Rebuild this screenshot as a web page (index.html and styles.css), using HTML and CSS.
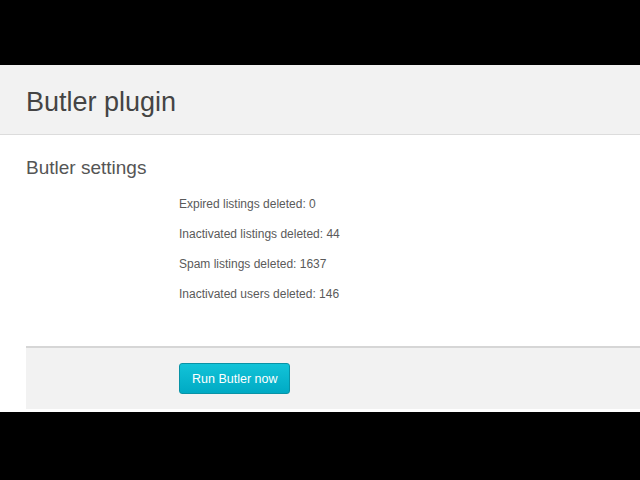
FILE: index.html
```html
<!DOCTYPE html>
<html>
<head>
<meta charset="utf-8">
<link rel="stylesheet" href="styles.css">
</head>
<body>
<div class="topbar"></div>
<div class="page">
  <header class="page-header">
    <h1 class="title">Butler plugin</h1>
  </header>
  <section class="content">
    <h2 class="subtitle">Butler settings</h2>
    <div class="stats">
      <p class="stat">Expired listings deleted: 0</p>
      <p class="stat">Inactivated listings deleted: 44</p>
      <p class="stat">Spam listings deleted: 1637</p>
      <p class="stat">Inactivated users deleted: 146</p>
    </div>
  </section>
  <div class="actions">
    <button class="btn">Run Butler now</button>
  </div>
</div>
</body>
</html>
```
FILE: styles.css
```css
html, body {
  margin: 0;
  padding: 0;
  background: #000;
  height: 480px;
  overflow: hidden;
  font-family: "Liberation Sans", Arial, sans-serif;
}
.topbar {
  height: 65px;
}
.page {
  background: #fff;
  height: 347px;
  display: flex;
  flex-direction: column;
}
.page-header {
  height: 70px;
  background: #f2f2f2;
  border-bottom: 1px solid #dcdcdc;
  display: flex;
  align-items: center;
  padding-left: 26px;
  box-sizing: border-box;
}
.title {
  margin: 0;
  font-size: 27px;
  font-weight: normal;
  color: #444;
  line-height: 1;
  padding-top: 6px;
}
.content {
  padding-left: 26px;
  height: 211px;
  box-sizing: border-box;
}
.subtitle {
  margin: 22px 0 0 0;
  font-size: 19px;
  font-weight: normal;
  color: #555;
  line-height: 22px;
}
.stats {
  padding-left: 153px;
  margin-top: 18px;
  display: flex;
  flex-direction: column;
  gap: 15px;
}
.stat {
  margin: 0;
  font-size: 12px;
  line-height: 15px;
  color: #5a5a5a;
}
.actions {
  margin-left: 26px;
  border-top: 2px solid #d6d6d6;
  background: #f2f2f2;
  height: 63px;
  box-sizing: border-box;
  padding: 15px 0 0 153px;
}
.btn {
  font-family: "Liberation Sans", Arial, sans-serif;
  font-size: 12.5px;
  color: #fff;
  background: linear-gradient(#12c3d8, #00aac4);
  border: 1px solid #0893a6;
  border-radius: 3px;
  height: 31px;
  padding: 0 12px;
  cursor: pointer;
}
```
